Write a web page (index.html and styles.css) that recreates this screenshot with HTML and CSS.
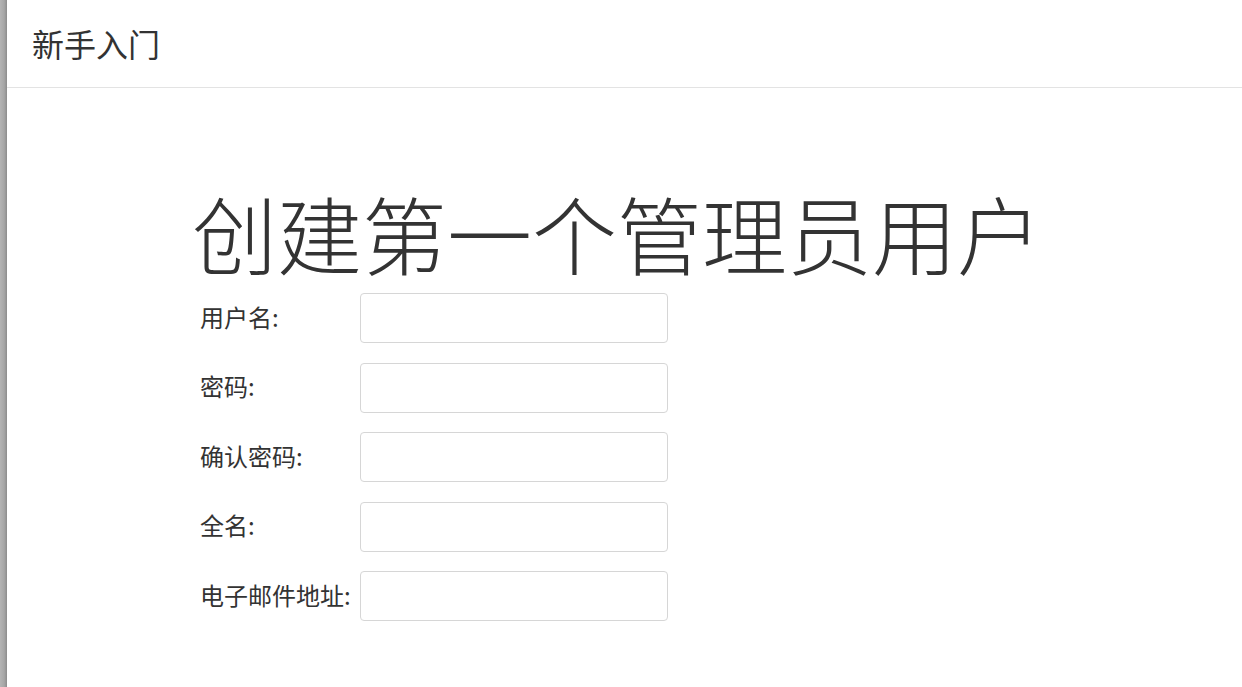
FILE: index.html
```html
<!DOCTYPE html>
<html lang="zh-CN">
<head>
<meta charset="utf-8">
<title>新手入门</title>
<link rel="stylesheet" href="styles.css">
</head>
<body>
<div class="frame">
  <div class="side-bar"></div>
  <div class="main">
    <header class="top-header">
      <h2 class="header-title">新手入门</h2>
    </header>
    <section class="content">
      <h1 class="page-title">创建第一个管理员用户</h1>
      <form class="admin-form">
        <label class="field-label" for="username">用户名:</label>
        <input class="field-input" id="username" type="text">
        <label class="field-label" for="password">密码:</label>
        <input class="field-input" id="password" type="password">
        <label class="field-label" for="confirm">确认密码:</label>
        <input class="field-input" id="confirm" type="password">
        <label class="field-label" for="fullname">全名:</label>
        <input class="field-input" id="fullname" type="text">
        <label class="field-label" for="email">电子邮件地址:</label>
        <input class="field-input" id="email" type="email">
      </form>
    </section>
  </div>
</div>
</body>
</html>
```
FILE: styles.css
```css
html, body {
  margin: 0;
  padding: 0;
  height: 100%;
  background: #ffffff;
  font-family: "Noto Sans CJK SC", "Noto Sans", sans-serif;
  color: #333333;
}

.frame {
  display: flex;
  min-height: 100%;
}

.side-bar {
  width: 7px;
  flex: 0 0 7px;
  background: linear-gradient(to right, #b4b4b4 0%, #a6a6a6 60%, #8c8c8c 100%);
}

.main {
  flex: 1;
  display: flex;
  flex-direction: column;
}

.top-header {
  height: 88px;
  box-sizing: border-box;
  border-bottom: 1px solid #e3e3e3;
  display: flex;
  align-items: center;
  padding-left: 25px;
}

.header-title {
  margin: 0;
  font-size: 32px;
  font-weight: 400;
  line-height: 1;
  color: #333333;
  padding-bottom: 2px;
}

.content {
  padding-left: 193px;
  padding-top: 101px;
}

.page-title {
  margin: 0 0 19px -8px;
  font-size: 85px;
  font-weight: 300;
  line-height: 1;
  color: #333333;
  white-space: nowrap;
}

.admin-form {
  display: grid;
  grid-template-columns: 160px 308px;
  row-gap: 19.5px;
  align-items: center;
}

.field-label {
  font-size: 24px;
  line-height: 1;
  color: #333333;
  padding-bottom: 3px;
  white-space: nowrap;
}

.field-input {
  box-sizing: border-box;
  width: 308px;
  height: 50px;
  border: 1px solid #d6d6d6;
  border-radius: 4px;
  background: #ffffff;
  margin: 0;
  padding: 6px 12px;
  font-size: 20px;
  font-family: inherit;
}
```
